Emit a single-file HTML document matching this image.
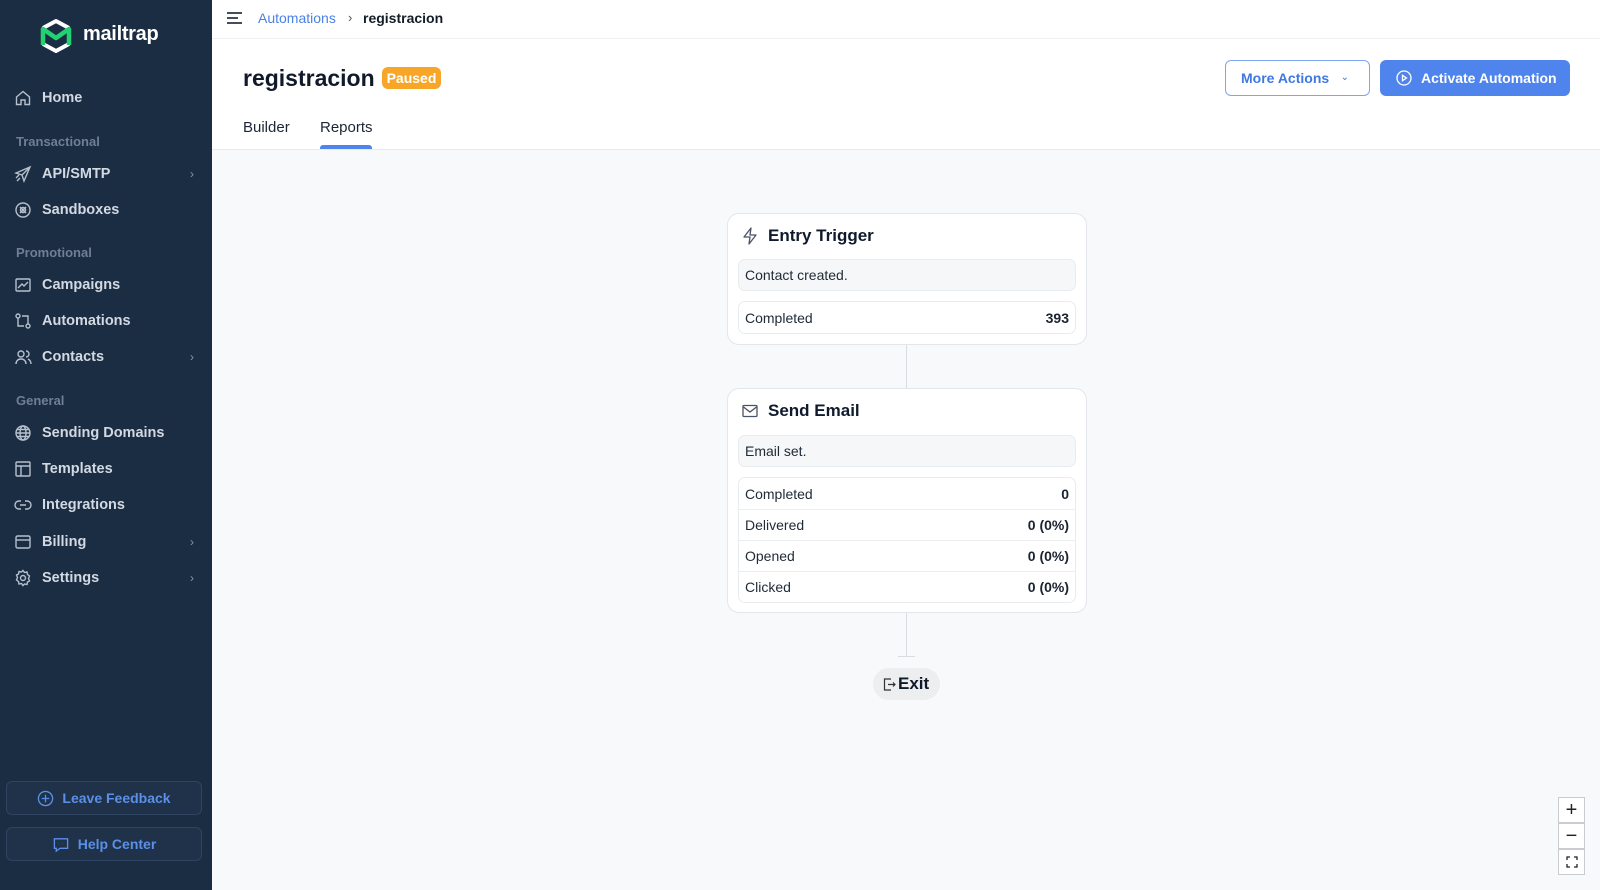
<!DOCTYPE html>
<html><head><meta charset="utf-8"><style>
*{box-sizing:border-box;margin:0;padding:0}
body{width:1600px;height:890px;overflow:hidden;font-family:"Liberation Sans",sans-serif;background:#f8f9fa;position:relative;color:#0f1b2d}
.sb{position:absolute;left:0;top:0;width:212px;height:890px;background:#1b2d43}
.logo{position:absolute;left:40px;top:18px}
.logot{position:absolute;left:83px;top:23px;color:#fff;font-size:20px;font-weight:bold;letter-spacing:-0.3px}
.ni{position:absolute;left:14px;height:24px;display:flex;align-items:center;color:#d3d9e2;font-size:14.5px;font-weight:bold;width:180px}
.ni svg{width:18px;height:18px;margin-right:10px;flex:none}
.ni .ch{position:absolute;right:0;color:#8896a8;font-size:12px;font-weight:normal}
.sec{position:absolute;left:16px;color:#6f7f94;font-size:13px;font-weight:bold}
.fb{position:absolute;left:6px;width:196px;height:34px;border:1px solid #2f4460;border-radius:6px;background:#1f3249;color:#5b8fe8;font-size:14px;font-weight:bold;display:flex;align-items:center;justify-content:center;gap:8px}
.top{position:absolute;left:212px;top:0;right:0;height:150px;background:#fff;border-bottom:1px solid #e8eaee}
.tb{position:absolute;left:0;right:0;top:38px;border-top:1px solid #eef0f3}
.card{position:absolute;left:727px;width:360px;background:#fff;border:1px solid #e3e6eb;border-radius:12px}
.ct{position:absolute;left:14px;font-size:17px;font-weight:bold;display:flex;align-items:center}
.ct svg{margin-right:10px}
.box{position:absolute;left:10px;right:10px;border:1px solid #e9ecef;border-radius:7px;font-size:14px;color:#1f2a37}
.row{height:31px;display:flex;justify-content:space-between;align-items:center;padding:0 6px 0 6px;border-top:1px solid #eceef1}
.row:first-child{border-top:none}
.row b{font-weight:bold;color:#1b2330}
.ln{position:absolute;left:906px;width:1px;background:#d9dce1}
.zc{position:absolute;left:1558px;width:27px;height:26px;border:1px solid #c9ccd1;background:#fff;display:flex;align-items:center;justify-content:center;font-size:20px;color:#222}
</style></head><body>
<div class="sb">
<svg class="logo" width="32" height="36" viewBox="0 0 32 36"><path d="M3 10 L16 3 L29 10" fill="none" stroke="#fff" stroke-width="4" stroke-linejoin="round"/><path d="M3 26 L16 33 L29 26" fill="none" stroke="#fff" stroke-width="4" stroke-linejoin="round"/><path d="M3 27 V11 L16 20 L29 11 V27" fill="none" stroke="#22d172" stroke-width="4.5" stroke-linejoin="round"/></svg>
<div class="logot">mailtrap</div>
<div class="ni" style="top:86px"><svg viewBox="0 0 18 18" fill="none" stroke="#b7c0cc" stroke-width="1.4"><path d="M2.5 8L9 2.5 15.5 8V15.5H11V11H7V15.5H2.5Z"/></svg>Home</div>
<div class="sec" style="top:134px">Transactional</div>
<div class="ni" style="top:162px"><svg viewBox="0 0 18 18" fill="none" stroke="#b7c0cc" stroke-width="1.4"><path d="M16 2L2 8l6 2 2 6z M8 10l8-8 M2 13l3-3 M3 16l3-3"/></svg>API/SMTP<span class="ch">›</span></div>
<div class="ni" style="top:198px"><svg viewBox="0 0 18 18" fill="none" stroke="#b7c0cc" stroke-width="1.4"><circle cx="9" cy="9" r="7"/><path d="M6 6l6 6M12 6l-6 6"/><circle cx="9" cy="9" r="2.5"/></svg>Sandboxes</div>
<div class="sec" style="top:245px">Promotional</div>
<div class="ni" style="top:273px"><svg viewBox="0 0 18 18" fill="none" stroke="#b7c0cc" stroke-width="1.4"><rect x="2" y="3" width="14" height="12" rx="1"/><path d="M4 12l4-4 2 2 4-4"/></svg>Campaigns</div>
<div class="ni" style="top:309px"><svg viewBox="0 0 18 18" fill="none" stroke="#b7c0cc" stroke-width="1.4"><circle cx="4" cy="4" r="2"/><circle cx="14" cy="14" r="2"/><path d="M4 6v8h6M14 12V4H8"/></svg>Automations</div>
<div class="ni" style="top:345px"><svg viewBox="0 0 18 18" fill="none" stroke="#b7c0cc" stroke-width="1.4"><circle cx="7" cy="6" r="3"/><path d="M2 16c0-3 2-5 5-5s5 2 5 5M12 3a3 3 0 010 6M14 11c2 1 3 3 3 5"/></svg>Contacts<span class="ch">›</span></div>
<div class="sec" style="top:393px">General</div>
<div class="ni" style="top:421px"><svg viewBox="0 0 18 18" fill="none" stroke="#b7c0cc" stroke-width="1.4"><circle cx="9" cy="9" r="7"/><ellipse cx="9" cy="9" rx="3" ry="7"/><path d="M2 9h14M3 5.5h12M3 12.5h12"/></svg>Sending Domains</div>
<div class="ni" style="top:457px"><svg viewBox="0 0 18 18" fill="none" stroke="#b7c0cc" stroke-width="1.4"><rect x="2" y="2" width="14" height="14" rx="1"/><path d="M2 6h14M7 6v10"/></svg>Templates</div>
<div class="ni" style="top:493px"><svg viewBox="0 0 18 18" fill="none" stroke="#b7c0cc" stroke-width="1.4"><path d="M7 5H5a4 4 0 000 8h2M11 5h2a4 4 0 010 8h-2M6 9h6"/></svg>Integrations</div>
<div class="ni" style="top:530px"><svg viewBox="0 0 18 18" fill="none" stroke="#b7c0cc" stroke-width="1.4"><rect x="2" y="3" width="14" height="12" rx="1.5"/><path d="M2 7h14"/></svg>Billing<span class="ch">›</span></div>
<div class="ni" style="top:566px"><svg viewBox="0 0 18 18" fill="none" stroke="#b7c0cc" stroke-width="1.4"><circle cx="9" cy="9" r="2.5"/><path d="M9 1.5l1.5 2 2.5-.5.5 2.5 2 1.5-1 2.5 1 2.5-2 1-.5 2.5-2.5-.5L9 16.5l-1.5-2-2.5.5-.5-2.5-2-1.5 1-2.5-1-2.5 2-1 .5-2.5 2.5.5z"/></svg>Settings<span class="ch">›</span></div>
<div class="fb" style="top:781px"><svg width="17" height="17" viewBox="0 0 18 18" fill="none" stroke="#5b8fe8" stroke-width="1.4"><circle cx="9" cy="9" r="7.5"/><path d="M9 5v8M5 9h8"/></svg>Leave Feedback</div>
<div class="fb" style="top:827px"><svg width="18" height="17" viewBox="0 0 18 18" fill="none" stroke="#5b8fe8" stroke-width="1.4"><path d="M2 3h14v10H8l-4 3v-3H2z"/><path d="M6 8h.1M9 8h.1M12 8h.1" stroke-width="2"/></svg>Help Center</div>
</div>
<div class="top">
<svg style="position:absolute;left:14px;top:11px" width="17" height="14" viewBox="0 0 17 14" stroke="#2a3444" stroke-width="1.8"><path d="M1 2h15M1 7h11M1 12h15"/></svg>
<div style="position:absolute;left:46px;top:10px;font-size:14px;color:#4a82e6">Automations</div>
<div style="position:absolute;left:136px;top:10px;font-size:13px;color:#555">›</div>
<div style="position:absolute;left:151px;top:10px;font-size:14px;font-weight:bold;color:#141c28">registracion</div>
<div class="tb"></div>
<div style="position:absolute;left:31px;top:65px;font-size:23px;font-weight:bold;color:#101a2a">registracion</div>
<div style="position:absolute;left:170px;top:67px;width:59px;height:22px;background:#f7a627;border-radius:6px;color:#fff;font-size:14px;font-weight:bold;text-align:center;line-height:22px">Paused</div>
<div style="position:absolute;left:31px;top:119px;font-size:15px;color:#1c2634">Builder</div>
<div style="position:absolute;left:108px;top:119px;font-size:15px;color:#1c2634">Reports</div>
<div style="position:absolute;left:108px;top:145px;width:52px;height:4px;background:#4f84ec;border-radius:3px 3px 0 0"></div>
<div style="position:absolute;left:1013px;top:60px;width:145px;height:36px;border:1px solid #7fa5f0;border-radius:6px;color:#3f78e0;font-size:14px;font-weight:bold;line-height:34px;padding-left:15px">More Actions<span style="position:absolute;right:20px;font-size:10px;font-weight:normal">⌄</span></div>
<div style="position:absolute;left:1168px;top:60px;width:190px;height:36px;background:#4f84ec;border-radius:6px;color:#fff;font-size:14px;font-weight:bold;line-height:36px;padding-left:41px"><svg style="position:absolute;left:16px;top:10px" width="16" height="16" viewBox="0 0 16 16" fill="none" stroke="#fff" stroke-width="1.3"><circle cx="8" cy="8" r="7"/><path d="M6.5 5.3v5.4L10.5 8z"/></svg>Activate Automation</div>
</div>
<div class="ln" style="top:345px;height:43px"></div>
<div class="ln" style="top:613px;height:44px"></div>
<div style="position:absolute;left:898px;top:656px;width:17px;height:1px;background:#d9dce1"></div>
<div class="card" style="top:213px;height:132px">
<div class="ct" style="top:12px"><svg width="16" height="18" viewBox="0 0 16 18" fill="none" stroke="#4a5363" stroke-width="1.3" stroke-linejoin="round"><path d="M9 1L2 10h6l-1 7 7-9H8z"/></svg>Entry Trigger</div>
<div class="box" style="top:45px;height:32px;background:#f6f7f8;padding:7px 6px">Contact created.</div>
<div class="box" style="top:87px;height:33px"><div class="row"><span>Completed</span><b>393</b></div></div>
</div>
<div class="card" style="top:388px;height:225px">
<div class="ct" style="top:12px"><svg width="16" height="14" viewBox="0 0 16 14" fill="none" stroke="#4a5363" stroke-width="1.3"><rect x="1" y="1.5" width="14" height="11" rx="1"/><path d="M1.5 3l6.5 5 6.5-5"/></svg>Send Email</div>
<div class="box" style="top:46px;height:32px;background:#f6f7f8;padding:7px 6px">Email set.</div>
<div class="box" style="top:88px;height:126px">
<div class="row"><span>Completed</span><b>0</b></div>
<div class="row"><span>Delivered</span><b>0 (0%)</b></div>
<div class="row"><span>Opened</span><b>0 (0%)</b></div>
<div class="row"><span>Clicked</span><b>0 (0%)</b></div>
</div>
</div>
<div style="position:absolute;left:873px;top:668px;width:67px;height:32px;border-radius:16px;background:#eceef0;font-size:17px;font-weight:bold;line-height:32px;padding-left:25px;color:#111a28"><svg style="position:absolute;left:10px;top:10px" width="13" height="13" viewBox="0 0 13 13" fill="none" stroke="#333" stroke-width="1.2"><path d="M8 1H1.5v11H8M5 6.5h7M10 4.5l2 2-2 2"/></svg>Exit</div>
<div class="zc" style="top:797px">+</div>
<div class="zc" style="top:823px">−</div>
<div class="zc" style="top:849px"><svg width="12" height="12" viewBox="0 0 12 12" fill="none" stroke="#222" stroke-width="1.3"><path d="M1 4V1h3M8 1h3v3M11 8v3H8M4 11H1V8"/></svg></div>
</body></html>
